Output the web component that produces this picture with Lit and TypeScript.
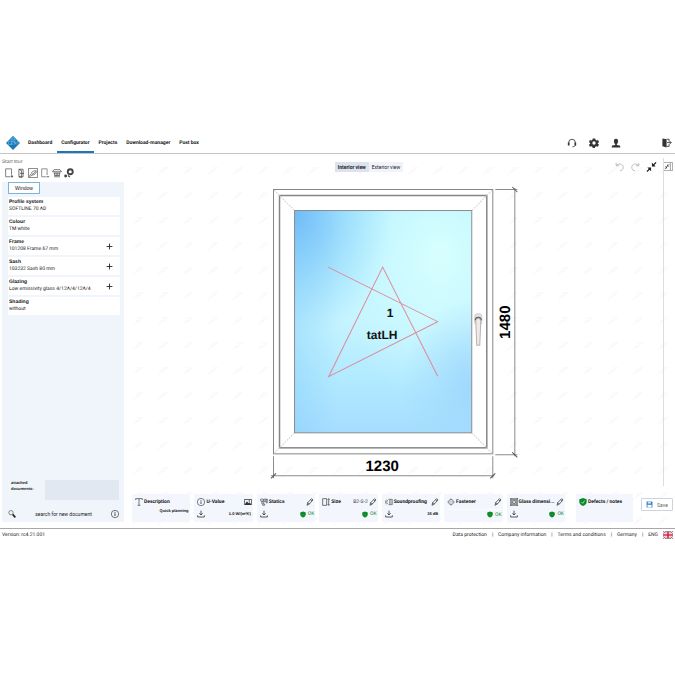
import { LitElement, html, css, svg, nothing } from "lit";
import { customElement, property } from "lit/decorators.js";

const icons: Record<string, unknown> = {
  headset: svg`<path d="M4 13v-2a8 8 0 0 1 16 0v2M20 16c0 4-3 5-7 5" fill="none" stroke="currentColor" stroke-width="2"/><path d="M2 11h4v7H2zM18 11h4v7h-4z" fill="currentColor"/>`,
  gear: svg`<path fill="currentColor" fill-rule="evenodd" d="M9 1h6l1 4 2 1 4-1 2 5-3 2v1l3 3-3 5-4-1-2 1-1 3H9l-1-3-2-1-4 1-2-5 3-3v-1L0 10l2-5 4 1 2-1zM12 8a4 4 0 1 0 0 8 4 4 0 0 0 0-8z"/>`,
  user: svg`<path fill="currentColor" d="M12 2c4 0 5 3 5 6s-1 5-3 7v2c5 1 7 1 8 2v4H2v-4c1-1 3-1 8-2v-2c-2-2-3-4-3-7s1-6 5-6z"/>`,
  exit: svg`<path fill="currentColor" d="M1 1l10 2v20L1 20z"/><path fill="none" stroke="currentColor" stroke-width="2" d="M11 3h6v5M17 15v5h-6M12 11h10M18 7l4 4-4 4"/>`,
  doorAdd: svg`<path d="M15 21H4V2h14v14" fill="none" stroke="currentColor" stroke-width="1.6"/><path d="M19 17v6M16 20h6" stroke="currentColor" stroke-width="2"/>`,
  doorOpen: svg`<path d="M7 3h10v18H7M7 3v18l6 2V6zM10 13h9" fill="none" stroke="currentColor" stroke-width="1.8"/>`,
  picture: svg`<path d="M1 1h22v22H1zM3 18l6-5 3 2 9-9M3 21l7-4 5-1 6-7M8 11l6-4h6" fill="none" stroke="currentColor" stroke-width="1.6"/>`,
  doorRemove: svg`<path d="M15 21H4V2h13v15" fill="none" stroke="currentColor" stroke-width="1.4"/><path d="M16 21h6" stroke="currentColor" stroke-width="2"/>`,
  roof: svg`<path d="M1 9l4-5h14l4 5zM4 12h16M6 12v6h12v-6M10 12v6M14 12v6M5 21h14" fill="none" stroke="currentColor" stroke-width="1.7"/>`,
  gears: svg`<circle cx="15" cy="9" r="6" fill="none" stroke="currentColor" stroke-width="4.500"/><circle cx="4" cy="19" r="3.500" fill="currentColor"/><path d="M10 18l4 4" stroke="currentColor" stroke-width="3"/>`,
  plus: svg`<path d="M12 2v20M2 12h20" stroke="currentColor" stroke-width="3"/>`,
  search: svg`<circle cx="9" cy="8" r="6.5" fill="none" stroke="#555" stroke-width="2"/><path d="M14 13l8 9" stroke="#222" stroke-width="5"/>`,
  info: svg`<circle cx="12" cy="12" r="11" fill="none" stroke="currentColor" stroke-width="1.8"/><path d="M12 10v8" fill="none" stroke="currentColor" stroke-width="2.5"/><circle cx="12" cy="6.5" r="1.5" fill="currentColor"/>`,
  letter: svg`<path d="M2 6V2h20v4M12 2v20M8 22h8" fill="none" stroke="currentColor" stroke-width="2"/>`,
  image: svg`<path fill="currentColor" fill-rule="evenodd" d="M1 3h22v18H1zM3 5v13l6-8 4 6 3-3 5 5V5zM16 7a2 2 0 1 1 0 4 2 2 0 0 1 0-4z"/>`,
  download: svg`<path d="M12 2v13M7 10l5 5 5-5M2 16v5h20v-5" fill="none" stroke="currentColor" stroke-width="2.4"/>`,
  statics: svg`<path d="M2 3h8v6H2zM12 3h5v8h-5zM19 3h3v12h-3zM5 11h6v5H5zM8 18h6v4H8z" fill="none" stroke="currentColor" stroke-width="1.6"/>`,
  pencil: svg`<path d="M3 22l2-8L17 2l4 4L10 18zM14 5l4 4M5 14l5 4" fill="none" stroke="currentColor" stroke-width="2.2"/>`,
  size: svg`<path d="M2 2h12v20H2zM20 2v20M17 5l3-3 3 3M17 19l3 3 3-3" fill="none" stroke="currentColor" stroke-width="2"/>`,
  sound: svg`<path d="M10 4h12v16H10M14 4v16M18 4v16M8 6a8 8 0 0 0 0 12M4 5a11 11 0 0 0 0 14" fill="none" stroke="currentColor" stroke-width="1.5"/>`,
  fastener: svg`<circle cx="12" cy="12" r="7.5" fill="none" stroke="currentColor" stroke-width="1.5"/><path d="M12 1v6M12 17v6M1 12h3M20 12h3M9 10v4M15 10v4" stroke="currentColor" stroke-width="1.5"/>`,
  glass: svg`<path d="M1 1h22v22H1zM5 5h14v14H5zM8 8h8v8H8zM1 1l4 4M23 1l-4 4M1 23l4-4M23 23l-4-4" fill="none" stroke="currentColor" stroke-width="1.8"/>`,
  shield: svg`<path d="M12 0l11 4v7c0 6-4 10-11 13C5 21 1 17 1 11V4z" fill="#0b8a28"/><path d="M7 12l4 4 6-8" fill="none" stroke="#bfe6c6" stroke-width="2.5"/>`,
  okShield: svg`<path d="M12 0l11 4v7c0 6-4 10-11 13C5 21 1 17 1 11V4z" fill="#0b8a28"/><path d="M8 12l3 3 4-5" fill="none" stroke="#47a95c" stroke-width="2"/>`,
  undo: svg`<path d="M4 2v7h7M4 9c4-6 17-6 17 4 0 5-4 8-8 8" fill="none" stroke="currentColor" stroke-width="1.8"/>`,
  redo: svg`<path d="M20 2v7h-7M20 9C16 3 3 3 3 13c0 5 4 8 8 8" fill="none" stroke="currentColor" stroke-width="1.8"/>`,
  shrink: svg`<path d="M23 1l-8 8M1 23l8-8" stroke="currentColor" stroke-width="3"/><path d="M13 2v9h9zM2 13h9v9z" fill="currentColor"/>`,
  panel: svg`<path d="M0 1h23v22H0M17 1v22" fill="none" stroke="#888" stroke-width="2"/><path d="M2 19l4-4M14 6l-4 4" stroke="currentColor" stroke-width="2"/><path d="M2 12h6v6zM14 12H8V6z" fill="currentColor"/>`,
  save: svg`<path d="M2 2h18l2 2v18H2z" fill="#2f80c4"/><path d="M6 2h11v7H6z" fill="#cfe4f5"/><path d="M5 13h14v9H5z" fill="#fff"/>`,
  flag: svg`<path fill="#243a7d" d="M0 3h24v18H0z"/><path stroke="#fff" stroke-width="5" d="M1 4l22 16M23 4L1 20"/><path stroke="#d6283c" stroke-width="2" d="M1 4l22 16M23 4L1 20"/><path stroke="#fff" stroke-width="7" d="M12 3v18M0 12h24"/><path stroke="#d6283c" stroke-width="4" d="M12 3v18M0 12h24"/>`,
};

@customElement("ui-icon")
class UiIcon extends LitElement {
  @property() name = "";
  static styles = css`
    :host { display: block; flex: none; width: 8px; height: 8px; }
    svg { display: block; width: 100%; height: 100%; }
  `;
  render() {
    return html`<svg viewBox="0 0 24 24" aria-hidden="true">${icons[this.name]}</svg>`;
  }
}

@customElement("window-drawing")
class WindowDrawing extends LitElement {
  static styles = css`
    :host { display: block; }
    svg { display: block; width: 100%; }
    .line { fill: none; stroke: #8c8c8c; }
    .frame { fill: #fff; stroke: #868686; }
    .miter { stroke: #d4d4d4; stroke-dasharray: 2 1; }
    .opening { fill: none; stroke: #e08a98; }
    .label { font: bold 12px "Liberation Sans", Arial, sans-serif; text-anchor: middle; fill: #111; }
    .measure { font: bold 15px "Liberation Sans Narrow", "Liberation Sans", Arial, sans-serif; text-anchor: middle; fill: #000; }
  `;
  render() {
    return html`<svg viewBox="267 186 253 294" role="img" aria-label="Window 1230 by 1480">
      <defs>
        <linearGradient id="base" x1="0" y1="0" x2="0" y2="1">
          <stop offset="0" stop-color="#b4f0ff" /><stop offset="0.5" stop-color="#c4f3ff" />
          <stop offset="0.75" stop-color="#b2eaff" /><stop offset="1" stop-color="#a6ddff" />
        </linearGradient>
        <radialGradient id="glow" cx="0.82" cy="0.2" r="0.65">
          <stop offset="0" stop-color="#d8fffe" /><stop offset="1" stop-color="#d0ffff" stop-opacity="0" />
        </radialGradient>
        <radialGradient id="corner" cx="0" cy="0.02" r="0.55">
          <stop offset="0" stop-color="#70bcf8" /><stop offset="1" stop-color="#8cd4fc" stop-opacity="0" />
        </radialGradient>
        <radialGradient id="edge" cx="1" cy="0.8" r="0.4">
          <stop offset="0" stop-color="#a0d8fd" /><stop offset="1" stop-color="#a0d8fd" stop-opacity="0" />
        </radialGradient>
        <linearGradient id="side" x1="0" y1="0" x2="1" y2="0">
          <stop offset="0" stop-color="#84ccfa" stop-opacity="0.4" /><stop offset="0.25" stop-color="#84ccfa" stop-opacity="0" />
        </linearGradient>
      </defs>
      <rect class="frame" x="273.5" y="189.5" width="219" height="264" />
      <rect class="frame" x="279.5" y="195.5" width="207" height="252" stroke-width="1.5" />
      <path class="miter" d="M274 190l20 20M492 190l-20 20M274 453l20-20M492 453l-20-20" />
      ${["base", "glow", "side", "corner", "edge"].map(
        (id) => svg`<rect x="294.5" y="210.5" width="177" height="222" fill="url(#${id})" />`
      )}
      <rect class="line" x="294.5" y="210.5" width="177" height="222" />
      <path class="opening" d="M328 267L437.5 321.5L328.5 376.5L382.5 267L437.5 376" />
      <path class="line" d="M273.5 456v22M492.5 456v22M271 475.5h223M495 189.5h22M495 454.5h22M514.5 188v268" />
      <path d="M271 478l5-5M490 478l5-5M512 187l5 5M512 452l5 5" stroke="#555" />
      <rect x="474.5" y="313.5" width="7" height="11" rx="3" fill="#e4e2e2" stroke="#d0cccc" />
      <path d="M475.5 321c0-4 5-4 5 0l-1 24h-3z" fill="#efe9e8" stroke="#b8b2b2" />
      <path d="M475 320c0-4 6-4 6 0" fill="none" stroke="#555" />
      <text class="label" x="390" y="317">1</text>
      <text class="label" x="382" y="339">tatLH</text>
      <text class="measure" x="382" y="471">1230</text>
      <text class="measure" transform="translate(510 322) rotate(-90)">1480</text>
    </svg>`;
  }
}

interface Card {
  icon: string;
  title: string;
  action?: string;
  extra?: string;
  download?: boolean;
  value?: string;
  ok?: boolean;
  muted?: boolean;
}

const cards: Card[] = [
  { icon: "letter", title: "Description", value: "Quick planning" },
  { icon: "info", title: "U-Value", action: "image", download: true, value: "1.0 W/(m²K)" },
  { icon: "statics", title: "Statics", action: "pencil", download: true, ok: true },
  { icon: "size", title: "Size", action: "pencil", extra: "B2-S-2", ok: true },
  { icon: "sound", title: "Soundproofing", action: "pencil", download: true, value: "35 dB" },
  { icon: "fastener", title: "Fastener", action: "pencil", ok: true, muted: true },
  { icon: "glass", title: "Glass dimensi...", action: "pencil", download: true, ok: true },
];

const parts = [
  { title: "Profile system", value: "SOFTLINE 70 AD" },
  { title: "Colour", value: "TM white" },
  { title: "Frame", value: "101208 Frame 67 mm", add: true },
  { title: "Sash", value: "103232 Sash 80 mm", add: true },
  { title: "Glazing", value: "Low emissivity glass 4/12A/4/12A/4", add: true },
  { title: "Shading", value: "without" },
];

@customElement("app-root")
class AppRoot extends LitElement {
  static styles = css`
    :host {
      display: flex; flex-direction: column; box-sizing: border-box; min-height: 100vh; padding: 20vh 0;
      background: #fff; color: #222; font: 5px/6px Roboto, "Liberation Sans", sans-serif;
      text-rendering: geometricPrecision;
    }
    * { box-sizing: border-box; }
    button, input { font: inherit; color: inherit; margin: 0; padding: 0; border: 0; background: none; }
    a { color: inherit; text-decoration: none; }
    header { display: flex; align-items: center; height: 19px; padding: 0 3px 2px 6px; border-bottom: 1px solid #c4c4c4; }
    .logo { width: 14px; height: 16px; margin-right: 4px; }
    nav { display: flex; gap: 1px; height: 18px; margin-bottom: -2px; }
    nav a { display: flex; align-items: center; padding: 0 4px; font-weight: bold; color: #111; border-bottom: 2px solid transparent; }
    nav a.current { border-color: #1c76ba; }
    .tools { display: flex; gap: 12px; margin-left: auto; color: #333; }
    .tools ui-icon { width: 10px; height: 10px; }
    .tools button:last-child { margin-left: 29px; }
    main { display: flex; flex: 1; }
    aside { display: flex; flex-direction: column; flex: 0 0 124px; padding: 5px 0 6px 2px; font-family: "Liberation Sans", Arial, sans-serif; }
    .tour { color: #666; align-self: flex-start; }
    .actions { display: flex; gap: 2px; padding: 3px 0 4px 2px; color: #444; }
    .actions ui-icon { width: 10px; height: 10px; }
    .panel { display: flex; flex-direction: column; flex: 1; padding: 0 4px 2px 6px; background: #f0f4fb; }
    .tab { align-self: flex-start; width: 32px; height: 12px; background: #fff; border: 1px solid #7db4dc; }
    .list { display: grid; gap: 2px; margin: 3px 0 0; padding: 0; list-style: none; }
    .part { display: flex; align-items: center; justify-content: space-between; height: 18px; padding: 0 7px 0 1px; background: #fff; }
    .part b, .part span { display: block; line-height: 7px; white-space: nowrap; }
    .part b { color: #111; }
    .part span { font-family: Roboto, sans-serif; }
    .part ui-icon { width: 7px; height: 7px; }
    .docs { display: flex; justify-content: space-between; margin-top: auto; padding: 0 1px 0 3px; font-size: 4px; font-weight: bold; }
    .drop { width: 74px; height: 20px; background: #e1e8f2; }
    .find { display: flex; align-items: center; margin-top: 8px; height: 12px; padding-right: 1px; font-family: Roboto, sans-serif; }
    .find label { display: flex; align-items: center; flex: 1; }
    .find input { flex: 1; min-width: 0; width: 0; text-align: center; outline: 0; }
    .find input::placeholder { color: #222; opacity: 1; }
    .work { position: relative; display: flex; flex-direction: column; flex: 1; min-width: 0; }
    .marks { position: absolute; inset: 0; width: 100%; height: 100%; }
    .top { position: relative; display: flex; flex: 1; }
    .stage { display: flex; flex-direction: column; flex: 1; min-width: 0; }
    .bar { display: flex; align-items: center; justify-content: space-between; padding: 8px 6px 0 0; }
    .views { display: flex; background: #f1f3fa; }
    .views button { height: 10px; padding: 0 3px; color: #222; }
    .views .on { background: #dde2f0; font-weight: bold; }
    .history { display: flex; gap: 5px; color: #aaa; }
    .history ui-icon { width: 11px; height: 10px; }
    .history .dark { color: #222; }
    window-drawing { width: 47%; margin: 14px auto; }
    .rail { width: 12px; margin: 4px 0 8px; padding-top: 4px; border-left: 1px solid #ddd; color: #444; }
    .rail ui-icon { width: 9px; height: 9px; }
    .cards { position: relative; display: flex; align-items: flex-start; gap: 4px; padding: 0 2px 6px 8px; }
    .card { flex: 1; min-width: 0; height: 28px; padding: 3px 1px 3px 3px; background: #f3f6fc; }
    .card.notes { flex: 0 0 57px; margin: 0 4px 0 7px; }
    .row { display: flex; align-items: center; gap: 1px; height: 10px; color: #333; white-space: nowrap; }
    .row + .row { margin-top: 2px; }
    .row b { color: #111; }
    .push { margin-left: auto; }
    .small { padding-right: 1px; font: bold 4px/6px "Liberation Sans", Arial, sans-serif; color: #111; }
    .card .text { height: 7px; margin-top: 0; }
    .muted { border-top: 1px solid #fafcff; }
    .ok { display: flex; align-items: center; gap: 2px; color: #0b8a28; }
    .ok ui-icon { width: 6px; height: 7px; }
    .save { display: flex; align-items: center; justify-content: center; gap: 4px; width: 32px; height: 13px; margin-top: 4px; border: 1px solid #ccd4e0; border-radius: 1px; background: #fff; color: #666; }
    .save ui-icon { width: 7px; height: 7px; }
    footer { display: flex; align-items: center; justify-content: space-between; height: 12px; padding: 0 2px; border-top: 1px solid #a8a8a8; }
    .links { display: flex; align-items: center; gap: 5px; }
    .links ui-icon { width: 10px; height: 10px; }
  `;

  renderCard(c: Card) {
    return html`<section class="card">
      <div class="row">
        <ui-icon name=${c.icon}></ui-icon><b>${c.title}</b>
        ${c.extra ? html`<span class="push">${c.extra}</span>` : nothing}
        ${c.action
          ? html`<button class=${c.extra ? "" : "push"} aria-label="Edit ${c.title}"><ui-icon name=${c.action}></ui-icon></button>`
          : nothing}
      </div>
      <div class="row ${c.muted ? "muted" : ""} ${c.action ? "" : "text"}">
        ${c.download ? html`<button aria-label="Download ${c.title}"><ui-icon name="download"></ui-icon></button>` : nothing}
        ${c.ok
          ? html`<span class="push ok"><ui-icon name="okShield"></ui-icon>OK</span>`
          : html`<span class="push small">${c.value}</span>`}
      </div>
    </section>`;
  }

  render() {
    return html`
      <header>
        <svg class="logo" viewBox="0 0 28 32" aria-hidden="true">
          <path d="M14 2l14 14-14 14L0 16z" fill="#1d78b8" />
          <path d="M14 2l7 7-7 7-7-7z" fill="#3c9ad2" />
          <path d="M5 13h4M5 13v6h5v-3M13 13h-2v6h3M13 16h-2M17 13v6M17 13l3 6v-6M22 13h4M24 13v6" stroke="#8cc4e8" fill="none" />
        </svg>
        <nav>
          ${["Dashboard", "Configurator", "Projects", "Download-manager", "Post box"].map(
            (n) => html`<a href="#" class=${n === "Configurator" ? "current" : ""}>${n}</a>`
          )}
        </nav>
        <div class="tools">
          ${["headset", "gear", "user", "exit"].map((n) => html`<button aria-label=${n}><ui-icon name=${n}></ui-icon></button>`)}
        </div>
      </header>
      <main>
        <aside>
          <a class="tour" href="#">Start tour</a>
          <div class="actions">
            ${["doorAdd", "doorOpen", "picture", "doorRemove", "roof", "gears"].map(
              (n) => html`<button aria-label=${n}><ui-icon name=${n}></ui-icon></button>`
            )}
          </div>
          <div class="panel">
            <button class="tab">Window</button>
            <ul class="list">
              ${parts.map(
                (p) => html`<li class="part">
                  <div><b>${p.title}</b><span>${p.value}</span></div>
                  ${p.add ? html`<button aria-label="Expand ${p.title}"><ui-icon name="plus"></ui-icon></button>` : nothing}
                </li>`
              )}
            </ul>
            <div class="docs"><span>attached<br />documents:</span><div class="drop"></div></div>
            <div class="find">
              <label><ui-icon name="search"></ui-icon><input aria-label="Search" placeholder="search for new document" /></label>
              <button aria-label="Information"><ui-icon name="info"></ui-icon></button>
            </div>
          </div>
        </aside>
        <div class="work">
          <svg class="marks" aria-hidden="true">
            <defs>
              <pattern id="tile" width="25" height="25" patternUnits="userSpaceOnUse">
                <path d="M9 21l4-5 2 1 4-4M13 14h5M12 19l5-4" fill="none" stroke="#f7f7f7" />
              </pattern>
            </defs>
            <rect width="100%" height="100%" fill="url(#tile)" />
          </svg>
          <div class="top">
            <div class="stage">
              <div class="bar">
                <span></span>
                <div class="views"><button class="on">Interior view</button><button>Exterior view</button></div>
                <div class="history">
                  <button aria-label="Undo"><ui-icon name="undo"></ui-icon></button>
                  <button aria-label="Redo"><ui-icon name="redo"></ui-icon></button>
                  <button class="dark" aria-label="Shrink"><ui-icon name="shrink"></ui-icon></button>
                </div>
              </div>
              <window-drawing></window-drawing>
            </div>
            <div class="rail"><button aria-label="Open panel"><ui-icon name="panel"></ui-icon></button></div>
          </div>
          <div class="cards">
            ${cards.map((c) => this.renderCard(c))}
            <section class="card notes"><div class="row"><ui-icon name="shield"></ui-icon><b>Defects / notes</b></div></section>
            <button class="save"><ui-icon name="save"></ui-icon>Save</button>
          </div>
        </div>
      </main>
      <footer>
        <span>Version: rc4.21.001</span>
        <div class="links">
          <a href="#">Data protection</a><span>|</span><a href="#">Company information</a><span>|</span>
          <a href="#">Terms and conditions</a><span>|</span><a href="#">Germany</a><span>|</span>
          <a href="#">ENG</a><ui-icon name="flag"></ui-icon>
        </div>
      </footer>
    `;
  }
}
